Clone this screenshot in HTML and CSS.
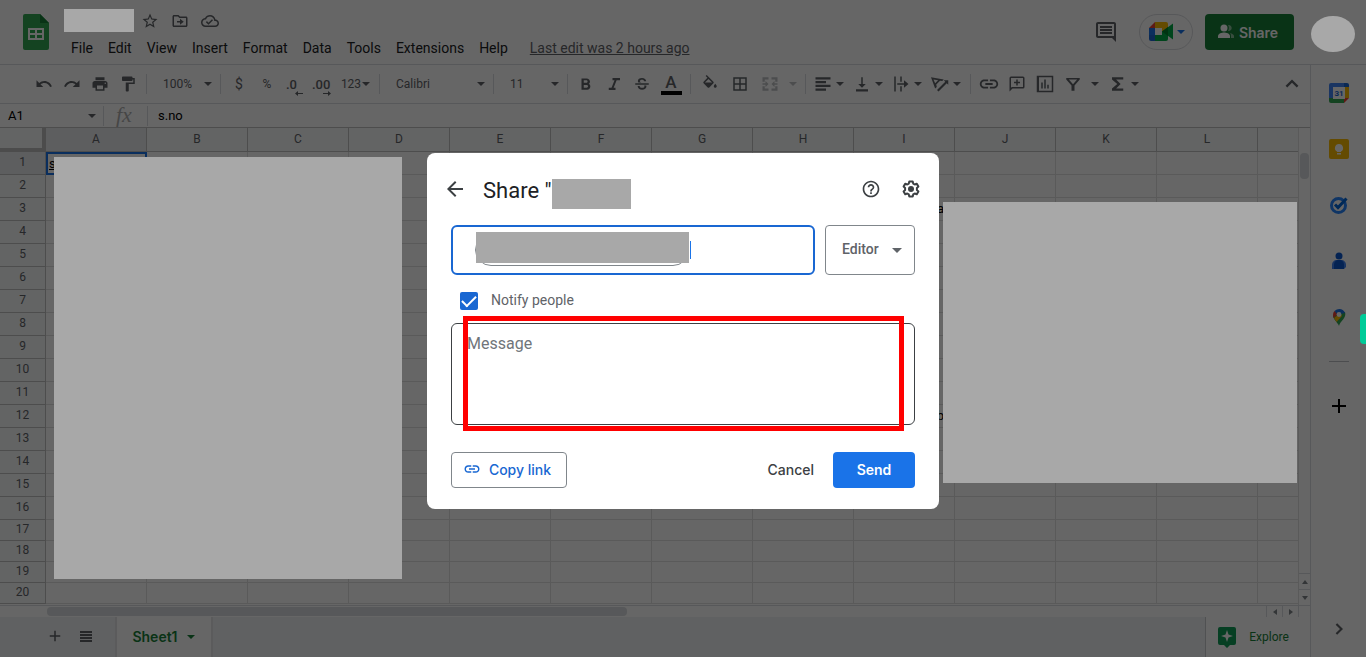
FILE: index.html
```html
<!DOCTYPE html>
<html lang="en">
<head>
<meta charset="utf-8">
<title>Sheet - Share</title>
<link rel="stylesheet" href="styles.css">
</head>
<body>
<svg class="defs" aria-hidden="true">
  <symbol id="caret" viewBox="0 0 10 6"><path d="M1 1h8L5 5z"/></symbol>
</svg>
<div class="app">
  <header class="topbar">
    <svg class="logo" viewBox="0 0 26 36"><path fill="#34a853" d="M2 0h15l9 9v25a2 2 0 0 1-2 2H2a2 2 0 0 1-2-2V2a2 2 0 0 1 2-2z"/><path fill="#188038" d="M17 0l9 9h-9z"/><path fill="#fff" fill-rule="evenodd" d="M5 14h16v12H5zM7 16v3h5v-3zM14 16v3h5v-3zM7 21v3h5v-3zM14 21v3h5v-3z"/></svg>
    <div class="titles">
      <div class="docline">
        <svg viewBox="0 0 24 24"><path d="M22 9.24l-7.19-.62L12 2 9.19 8.63 2 9.24l5.46 4.73L5.82 21 12 17.27 18.18 21l-1.63-7.03L22 9.24zM12 15.4l-3.76 2.27 1-4.28-3.32-2.88 4.38-.38L12 6.1l1.71 4.04 4.38.38-3.32 2.88 1 4.28L12 15.4z"/></svg>
        <svg viewBox="0 0 24 24"><path d="M20 6h-8l-2-2H4c-1.100 0-2 .9-2 2v12c0 1.100.9 2 2 2h16c1.100 0 2-.9 2-2V8c0-1.100-.9-2-2-2zm0 12H4V6h5.200l2 2H20v10zm-8-4v3l5-4-5-4v3H8v2z"/></svg>
        <svg viewBox="0 0 24 24"><path d="M19.350 10.040C18.670 6.590 15.640 4 12 4 9.110 4 6.600 5.640 5.350 8.040 2.340 8.360 0 10.910 0 14c0 3.310 2.690 6 6 6h13c2.760 0 5-2.240 5-5 0-2.640-2.050-4.780-4.650-4.960zM19 18H6c-2.210 0-4-1.790-4-4 0-2.050 1.530-3.760 3.560-3.970l1.070-.11.500-.95C8.080 7.140 9.940 6 12 6c2.620 0 4.880 1.860 5.390 4.430l.3 1.500 1.530.11c1.560.1 2.780 1.410 2.780 2.960 0 1.650-1.350 3-3 3zm-9-3.800L7.900 12.100 6.500 13.500 10 17l6-6-1.400-1.400z"/></svg>
      </div>
      <nav class="menu">
        <button>File</button><button>Edit</button><button>View</button><button>Insert</button><button>Format</button><button>Data</button><button>Tools</button><button>Extensions</button><button>Help</button>
        <a href="#history">Last edit was 2 hours ago</a>
      </nav>
    </div>
    <div class="topactions">
      <button class="plain" aria-label="Comments"><svg width="24" height="24" viewBox="0 0 24 24"><path d="M22 4c0-1.100-.9-2-2-2H4c-1.100 0-2 .9-2 2v12c0 1.100.9 2 2 2h14l4 4V4zm-2 12H4V4h16v12zM6 12h12v2H6zm0-3h12v2H6zm0-3h12v2H6z"/></svg></button>
      <button class="meet" aria-label="Meet">
        <svg width="24" height="20" viewBox="0 0 24 20"><path fill="#ea4335" d="M0 6l6-6v6z"/><path fill="#fbbc04" d="M6 0h11a2 2 0 0 1 2 2v6l-6 2V6H6z"/><path fill="#1a73e8" d="M0 6h6v7H0z"/><path fill="#1967d2" d="M0 13h6v6H2a2 2 0 0 1-2-2z"/><path fill="#00ac47" d="M6 13h7V9h6v8a2 2 0 0 1-2 2H6zM13 9.500L24 1.500v16z"/><path fill="#00832d" d="M13 9.500l6-4.500v9z"/></svg>
        <svg class="blue" width="10" height="6"><use href="#caret"/></svg>
      </button>
      <button class="sharebtn"><svg width="18" height="16" viewBox="0 0 18 16"><circle cx="7" cy="4" r="3.500" fill="currentColor"/><path fill="currentColor" d="M1 14v-2c0-2.500 4-3.500 6-3.500s6 1 6 3.500v2z"/><path fill="currentColor" opacity=".5" d="M11 1c5-.5 5 6.500 0 6 1.200-2 1.200-4 0-6zM13 9c2 .5 4 1.500 4 3v2h-3v-2c0-1.200-.3-2.200-1-3z"/></svg>Share</button>
      <span class="avatar-slot"></span>
    </div>
  </header>
  <div class="body">
    <div class="work">
      <div class="toolbar">
        <button class="ic" aria-label="Undo"><svg viewBox="0 0 24 24"><path d="M12.500 8c-2.650 0-5.050 1-6.900 2.600L2 7v9h9l-3.620-3.620c1.390-1.160 3.160-1.880 5.120-1.880 3.540 0 6.550 2.310 7.600 5.500l2.370-.78C21.080 11.030 17.150 8 12.500 8z"/></svg></button>
        <button class="ic" aria-label="Redo"><svg viewBox="0 0 24 24"><path d="M18.400 10.600C16.550 9 14.150 8 11.500 8c-4.650 0-8.580 3.030-9.960 7.220L3.900 16c1.050-3.190 4.050-5.500 7.600-5.500 1.950 0 3.730.72 5.120 1.880L13 16h9V7l-3.600 3.600z"/></svg></button>
        <button class="ic" aria-label="Print"><svg viewBox="0 0 24 24"><path d="M19 8H5c-1.660 0-3 1.340-3 3v6h4v4h12v-4h4v-6c0-1.660-1.340-3-3-3zm-3 11H8v-5h8v5zm3-7c-.55 0-1-.45-1-1s.45-1 1-1 1 .45 1 1-.45 1-1 1zm-1-9H6v4h12V3z"/></svg></button>
        <button class="ic" aria-label="Paint format"><svg viewBox="0 0 24 24"><path d="M18 4V3c0-.55-.45-1-1-1H5c-.55 0-1 .45-1 1v4c0 .55.45 1 1 1h12c.55 0 1-.45 1-1V6h1v4H9v11c0 .55.45 1 1 1h2c.55 0 1-.45 1-1v-9h8V4h-3z"/></svg></button>
        <i class="sep"></i>
        <button class="pick">100%<svg width="10" height="6"><use href="#caret"/></svg></button>
        <i class="sep flush"></i>
        <button class="ic txt">$</button><button class="ic txt small">%</button>
        <button class="ic txt dec">.0<svg width="8" height="5" viewBox="0 0 8 5"><path d="M3 0v2h5v1H3v2L0 2.500z"/></svg></button>
        <button class="ic txt dec">.00<svg width="8" height="5" viewBox="0 0 8 5"><path d="M5 0v2H0v1h5v2l3-2.500z"/></svg></button>
        <button class="num">123<svg width="10" height="6"><use href="#caret"/></svg></button>
        <i class="sep"></i>
        <button class="pick wide">Calibri<svg width="10" height="6"><use href="#caret"/></svg></button>
        <i class="sep bare"></i>
        <button class="pick">11<svg width="10" height="6"><use href="#caret"/></svg></button>
        <i class="sep flush"></i>
        <button class="ic" aria-label="Bold"><svg viewBox="0 0 24 24"><path d="M15.600 11.800c1-.7 1.700-1.800 1.700-2.800 0-2.500-1.900-4.500-4.400-4.500H6v15h7.700c2.300 0 4.100-1.900 4.100-4.200 0-1.600-.9-2.900-2.200-3.500zM9 7h3.400c.9 0 1.700.7 1.700 1.700s-.8 1.700-1.700 1.700H9zm3.900 10H9v-3.700h3.900c1 0 1.800.8 1.800 1.800S13.900 17 12.900 17z"/></svg></button>
        <button class="ic" aria-label="Italic"><svg viewBox="0 0 24 24"><path d="M10 4v3h2.700l-4 10H5v3h9v-3h-2.500l4-10H20V4z"/></svg></button>
        <button class="ic" aria-label="Strikethrough"><svg viewBox="0 0 24 24"><path d="M3 11h18v2H3zM12 4c-3.300 0-5.500 1.700-5.500 4 0 .8.200 1.400.6 2h4.200C10 9.600 9.200 9 9.200 8c0-1 1.100-1.800 2.800-1.800S14.800 7 14.900 8.300h2.700C17.500 5.700 15.300 4 12 4zm2.800 10c.3.400.4.800.4 1.300 0 1.100-1.200 1.800-3 1.800-2 0-3.200-.9-3.300-2.600H6.200c.1 3.200 2.500 5 5.900 5s5.800-1.700 5.800-4.200c0-.5-.1-.9-.2-1.300z"/></svg></button>
        <button class="ic textcolor" aria-label="Text color">A</button>
        <i class="sep"></i>
        <button class="ic w30" aria-label="Fill color"><svg viewBox="0 0 24 24"><path d="M16.560 8.940L7.620 0 6.210 1.410l2.380 2.380-5.150 5.150c-.59.59-.59 1.540 0 2.120l5.500 5.500c.29.29.68.440 1.060.440s.77-.15 1.060-.440l5.500-5.500c.59-.58.59-1.530 0-2.120zM5.210 10L10 5.210 14.790 10zM19 11.500s-2 2.170-2 3.500c0 1.100.9 2 2 2s2-.9 2-2c0-1.330-2-3.500-2-3.500z"/></svg></button>
        <button class="ic w30" aria-label="Borders"><svg viewBox="0 0 24 24"><path fill-rule="evenodd" d="M3 3h18v18H3zm2 2v6h6V5zm8 0v6h6V5zm-8 8v6h6v-6zm8 0v6h6v-6z"/></svg></button>
        <button class="ic w30 off" aria-label="Merge"><svg viewBox="0 0 24 24"><path d="M2 3h8v3H5v3H2zM14 3h8v6h-3V6h-5zM2 15h3v3h5v3H2zM19 15h3v6h-8v-3h5zM2 11h4V8l4 4-4 4v-3H2zM22 11h-4V8l-4 4 4 4v-3h4z"/></svg></button>
        <button class="mini off" aria-label="Merge type"><svg width="10" height="6"><use href="#caret"/></svg></button>
        <i class="sep"></i>
        <button class="duo" aria-label="Horizontal align"><svg viewBox="0 0 24 24"><path d="M2 3h20v3H2zM2 8h14v3H2zM2 13h20v3H2zM2 18h14v3H2z"/></svg><svg class="c"><use href="#caret"/></svg></button>
        <button class="duo" aria-label="Vertical align"><svg viewBox="0 0 24 24"><path d="M17 12h-4V3h-2v9H7l5 5zM4 19v3h16v-3z"/></svg><svg class="c"><use href="#caret"/></svg></button>
        <button class="duo" aria-label="Wrapping"><svg viewBox="0 0 24 24"><path d="M3 2h2v20H3zM11 2h2v7h-2zM11 15h2v7h-2zM7 11h9V7l6 5-6 5v-4H7z"/></svg><svg class="c"><use href="#caret"/></svg></button>
        <button class="duo" aria-label="Rotation"><svg viewBox="0 0 24 24"><path d="M0 3l17 3-2 2-3-.5-5 5 .7 3.500L5.500 18zm3.300 2.900L5.500 11l4-4zM23 7v6l-2-2L10 22l-2-2L19 9l-2-2z"/></svg><svg class="c"><use href="#caret"/></svg></button>
        <i class="sep"></i>
        <button class="ic" aria-label="Link"><svg class="big" viewBox="0 0 24 24"><path d="M3.900 12c0-1.710 1.390-3.100 3.100-3.100h4V7H7c-2.760 0-5 2.240-5 5s2.240 5 5 5h4v-1.900H7c-1.710 0-3.100-1.390-3.100-3.100zM8 13h8v-2H8v2zm9-6h-4v1.900h4c1.710 0 3.100 1.390 3.100 3.100s-1.390 3.100-3.100 3.100h-4V17h4c2.760 0 5-2.240 5-5s-2.240-5-5-5z"/></svg></button>
        <button class="ic" aria-label="Comment"><svg viewBox="0 0 24 24"><path fill-rule="evenodd" d="M4 2h16a2 2 0 0 1 2 2v12a2 2 0 0 1-2 2H6l-4 4V4a2 2 0 0 1 2-2zm0 2v13l1-1h15V4zm7 2h2v3h3v2h-3v3h-2v-3H8V9h3z"/></svg></button>
        <button class="ic" aria-label="Chart"><svg viewBox="0 0 24 24"><path fill-rule="evenodd" d="M1 1h22v22H1zm3 2v18h17V3zm3 7h2v8H7zm4-4h2v12h-2zm4 7h2v5h-2z"/></svg></button>
        <button class="duo filter" aria-label="Filter"><svg viewBox="0 0 24 24"><path fill-rule="evenodd" d="M3 4h18v2l-7 8v7h-4v-7L3 6zm3.500 2L12 12.300 17.500 6z"/></svg><svg class="c"><use href="#caret"/></svg></button>
        <button class="duo" aria-label="Functions"><svg viewBox="0 0 24 24"><path d="M19 3H4v3l7 6-7 6v3h15v-3H9.500l6-6-6-6H19z"/></svg><svg class="c"><use href="#caret"/></svg></button>
        <button class="ic collapse" aria-label="Hide the menus"><svg class="big" viewBox="0 0 24 24"><path d="M12 7l-7 7 1.800 1.800L12 10.600l5.200 5.200L19 14z"/></svg></button>
      </div>
      <div class="formula">
        <button class="namebox">A1<svg width="10" height="6"><use href="#caret"/></svg></button>
        <span class="fx">fx</span>
        <input aria-label="Formula" value="s.no">
      </div>
      <div class="gridrow">
        <div class="grid">
          <table>
            <colgroup><col class="rh"><col span="12" class="cw"><col></colgroup>
            <thead><tr><th class="corner"></th><th class="on">A</th><th>B</th><th>C</th><th>D</th><th>E</th><th>F</th><th>G</th><th>H</th><th>I</th><th>J</th><th>K</th><th>L</th><th></th></tr></thead>
            <tbody>
              <tr><th class="on">1</th><td class="sel">s.no</td><td></td><td></td><td></td><td></td><td></td><td></td><td></td><td></td><td></td><td></td><td></td><td></td></tr>
              <tr><th>2</th><td></td><td></td><td></td><td></td><td></td><td></td><td></td><td></td><td></td><td></td><td></td><td></td><td></td></tr>
              <tr><th>3</th><td></td><td></td><td></td><td></td><td></td><td></td><td></td><td></td><td class="end">a</td><td></td><td></td><td></td><td></td></tr>
              <tr><th>4</th><td></td><td></td><td></td><td></td><td></td><td></td><td></td><td></td><td></td><td></td><td></td><td></td><td></td></tr>
              <tr><th>5</th><td></td><td></td><td></td><td></td><td></td><td></td><td></td><td></td><td></td><td></td><td></td><td></td><td></td></tr>
              <tr><th>6</th><td></td><td></td><td></td><td></td><td></td><td></td><td></td><td></td><td></td><td></td><td></td><td></td><td></td></tr>
              <tr><th>7</th><td></td><td></td><td></td><td></td><td></td><td></td><td></td><td></td><td></td><td></td><td></td><td></td><td></td></tr>
              <tr><th>8</th><td></td><td></td><td></td><td></td><td></td><td></td><td></td><td></td><td></td><td></td><td></td><td></td><td></td></tr>
              <tr><th>9</th><td></td><td></td><td></td><td></td><td></td><td></td><td></td><td></td><td></td><td></td><td></td><td></td><td></td></tr>
              <tr><th>10</th><td></td><td></td><td></td><td></td><td></td><td></td><td></td><td></td><td></td><td></td><td></td><td></td><td></td></tr>
              <tr><th>11</th><td></td><td></td><td></td><td></td><td></td><td></td><td></td><td></td><td></td><td></td><td></td><td></td><td></td></tr>
              <tr><th>12</th><td></td><td></td><td></td><td></td><td></td><td></td><td></td><td></td><td class="end">b</td><td></td><td></td><td></td><td></td></tr>
              <tr><th>13</th><td></td><td></td><td></td><td></td><td></td><td></td><td></td><td></td><td></td><td></td><td></td><td></td><td></td></tr>
              <tr><th>14</th><td></td><td></td><td></td><td></td><td></td><td></td><td></td><td></td><td></td><td></td><td></td><td></td><td></td></tr>
              <tr><th>15</th><td></td><td></td><td></td><td></td><td></td><td></td><td></td><td></td><td></td><td></td><td></td><td></td><td></td></tr>
              <tr><th>16</th><td></td><td></td><td></td><td></td><td></td><td></td><td></td><td></td><td></td><td></td><td></td><td></td><td></td></tr>
              <tr class="low"><th>17</th><td></td><td></td><td></td><td></td><td></td><td></td><td></td><td></td><td></td><td></td><td></td><td></td><td></td></tr>
              <tr class="low"><th>18</th><td></td><td></td><td></td><td></td><td></td><td></td><td></td><td></td><td></td><td></td><td></td><td></td><td></td></tr>
              <tr class="low"><th>19</th><td></td><td></td><td></td><td></td><td></td><td></td><td></td><td></td><td></td><td></td><td></td><td></td><td></td></tr>
              <tr class="low"><th>20</th><td></td><td></td><td></td><td></td><td></td><td></td><td></td><td></td><td></td><td></td><td></td><td></td><td></td></tr>
            </tbody>
          </table>
        </div>
        <div class="vscroll"><i class="thumb"></i><i class="arrow"><svg viewBox="0 0 6 4"><path d="M0 4h6L3 0z"/></svg></i><i class="arrow"><svg viewBox="0 0 6 4"><path d="M0 0h6L3 4z"/></svg></i></div>
      </div>
      <div class="hscroll"><i class="thumb"></i><i class="arrow"><svg viewBox="0 0 4 6"><path d="M4 0v6L0 3z"/></svg></i><i class="arrow"><svg viewBox="0 0 4 6"><path d="M0 0v6l4-3z"/></svg></i><i class="cornerbox"></i></div>
      <footer class="tabs">
        <button class="plain" aria-label="Add sheet"><svg width="18" height="18" viewBox="0 0 24 24"><path d="M19 13h-6v6h-2v-6H5v-2h6V5h2v6h6z"/></svg></button>
        <button class="plain" aria-label="All sheets"><svg width="12" height="12" viewBox="0 0 12 12"><path d="M0 1h12v2H0zM0 4h12v2H0zM0 7h12v2H0zM0 10h12v2H0z"/></svg></button>
        <button class="tab">Sheet1<svg width="10" height="6"><use href="#caret"/></svg></button>
        <button class="explore"><svg width="18" height="21" viewBox="0 0 18 21"><path fill="#0f9d58" d="M2 0h14a2 2 0 0 1 2 2v14a2 2 0 0 1-2 2h-4l-3 3-3-3H2a2 2 0 0 1-2-2V2a2 2 0 0 1 2-2z"/><path fill="#fff" d="M9 3l1.500 4.500L15 9l-4.500 1.500L9 15l-1.500-4.500L3 9l4.500-1.500z"/></svg>Explore</button>
      </footer>
    </div>
    <aside class="side">
      <button class="plain" aria-label="Calendar"><svg width="20" height="20" viewBox="0 0 20 20"><path fill="#4285f4" d="M2 0h13v4H4v11H0V2a2 2 0 0 1 2-2z"/><path fill="#1967d2" d="M15 0h3a2 2 0 0 1 2 2v2h-5z"/><path fill="#fbbc04" d="M15 4h5v11h-5z"/><path fill="#34a853" d="M0 15h15v5H2a2 2 0 0 1-2-2z"/><path fill="#ea4335" d="M15 15h5l-5 5z"/><path fill="#fff" d="M4 4h12v12H4z"/><text x="10" y="13" text-anchor="middle" class="day">31</text></svg></button>
      <button class="plain" aria-label="Keep"><svg width="20" height="20" viewBox="0 0 20 20"><rect width="20" height="20" rx="2" fill="#fbbc04"/><path fill="#fff" d="M10 5a4 4 0 0 1 2 7.500V13H8v-.5A4 4 0 0 1 10 5zM8 14h4v1.500H8z"/></svg></button>
      <button class="plain" aria-label="Tasks"><svg width="20" height="20" viewBox="0 0 20 20"><circle cx="9.500" cy="10.500" r="7" fill="none" stroke="#2684fc" stroke-width="3"/><path d="M6 9.500l3 3 8.500-9" fill="none" stroke="#0066da" stroke-width="3"/></svg></button>
      <button class="plain" aria-label="Contacts"><svg width="20" height="20" viewBox="0 0 20 20"><circle cx="10" cy="5" r="3.500" fill="#0b57d0"/><path fill="#4285f4" d="M3 18v-4c0-3 2-5 5-5h4c3 0 5 2 5 5v2l-2 2z"/><path fill="#0b57d0" d="M5 18v-4c0-3 1.500-5 5-5s5 2 5 5v4z"/></svg></button>
      <button class="plain" aria-label="Maps"><svg width="20" height="20" viewBox="0 0 20 20"><path fill="#34a853" d="M10 19c-.7-3-6-6.500-6-11l12-3c2 6-5 9-6 14z"/><path fill="#fbbc04" d="M5 11l6-5 2 3-5.500 6z"/><path fill="#ea4335" d="M4.500 11C3.500 8 4 5.500 5.500 4L9 7z"/><path fill="#1a73e8" d="M5.500 4C9 .5 14.500 1.500 16 6l-5 1-3 0z"/><circle cx="10" cy="7.500" r="2.400" fill="#fff"/></svg></button>
      <hr>
      <button class="plain add" aria-label="Get add-ons"><svg width="20" height="20" viewBox="0 0 20 20"><path d="M9 3h2v6h6v2h-6v6H9v-6H3V9h6z"/></svg></button>
      <button class="plain last" aria-label="Hide side panel"><svg width="20" height="20" viewBox="0 0 24 24"><path d="M9.800 5L8 6.800l5.200 5.200L8 17.200 9.800 19l7-7z"/></svg></button>
    </aside>
  </div>
</div>

<div class="scrim">
  <form class="dialog" role="dialog" aria-label="Share">
    <div class="dhead">
      <button type="button" class="plain" aria-label="Back"><svg width="24" height="24" viewBox="0 0 24 24"><path d="M20 11H7.830l5.590-5.590L12 4l-8 8 8 8 1.410-1.410L7.830 13H20v-2z"/></svg></button>
      <h2>Share "<span class="mask name"></span></h2>
      <button type="button" class="plain help" aria-label="Help"><svg width="20" height="20" viewBox="0 0 24 24"><path d="M11 18h2v-2h-2v2zm1-16C6.480 2 2 6.480 2 12s4.480 10 10 10 10-4.480 10-10S17.520 2 12 2zm0 18c-4.410 0-8-3.590-8-8s3.590-8 8-8 8 3.590 8 8-3.590 8-8 8zm0-14c-2.210 0-4 1.790-4 4h2c0-1.100.9-2 2-2s2 .9 2 2c0 2-3 1.750-3 5h2c0-2.250 3-2.500 3-5 0-2.210-1.790-4-4-4z"/></svg></button>
      <button type="button" class="plain" aria-label="Settings"><svg width="20" height="20" viewBox="0 0 20 20"><path d="M8.300 2.500h3.400l.5 2.100 1.500.9 2.100-.7 1.600 2.800L15.900 9v2l1.500 1.400-1.600 2.800-2.100-.7-1.500.9-.5 2.100H8.300l-.5-2.100-1.500-.9-2.100.7-1.600-2.800L4.100 11V9L2.600 7.600l1.600-2.800 2.100.7 1.500-.9z" fill="none" stroke="#3c4043" stroke-width="2" stroke-linejoin="round"/><circle cx="10" cy="10" r="3"/></svg></button>
    </div>
    <div class="people">
      <div class="field"><span class="chip"><span class="mask"></span></span><input aria-label="Add people"></div>
      <div class="role"><select aria-label="Role"><option>Editor</option></select><svg width="10" height="5" viewBox="1 1 8 4"><path d="M1 1h8L5 5z"/></svg></div>
    </div>
    <label class="notify"><input type="checkbox" checked><span>Notify people</span></label>
    <div class="message"><textarea aria-label="Message" placeholder="Message"></textarea><i class="highlight"></i></div>
    <div class="actions">
      <button type="button" class="copy"><svg width="18" height="18" viewBox="0 0 24 24"><path d="M3.900 12c0-1.710 1.390-3.100 3.100-3.100h4V7H7c-2.760 0-5 2.240-5 5s2.240 5 5 5h4v-1.900H7c-1.710 0-3.100-1.390-3.100-3.100zM8 13h8v-2H8v2zm9-6h-4v1.900h4c1.710 0 3.100 1.390 3.100 3.100s-1.390 3.100-3.100 3.100h-4V17h4c2.760 0 5-2.240 5-5s-2.240-5-5-5z"/></svg>Copy link</button>
      <button type="button" class="cancel">Cancel</button>
      <button type="button" class="send">Send</button>
    </div>
  </form>
</div>
<div class="cover doc"></div>
<div class="cover avatar"></div>
<div class="cover left"></div>
<div class="cover right"></div>
<div class="cover knob"></div>
</body>
</html>
```
FILE: styles.css
```css
* { box-sizing: border-box; }
body { margin: 0; font-family: Roboto, "Liberation Sans", sans-serif; font-size: 14px; color: #000; overflow: hidden; }
button, input, select, textarea { font: inherit; color: inherit; }
button { background: none; border: 0; padding: 0; display: flex; align-items: center; justify-content: center; white-space: nowrap; }
svg { display: block; fill: currentColor; flex: none; }
i { font-style: normal; }
.defs { display: none; }
.app { height: 100vh; display: flex; flex-direction: column; background: #fff; color: #5f6368; }

.topbar { flex: none; height: 65px; display: flex; border-bottom: 1px solid #dadce0; }
.logo { width: 26px; height: 36px; margin: 14px 15px 0 23px; }
.docline { display: flex; gap: 12px; padding: 12px 0 0 77px; }
.docline svg { width: 18px; height: 18px; }
.menu { display: flex; align-items: center; gap: 1px; height: 36px; color: #202124; }
.menu button { padding: 0 7px; }
.menu a { margin-left: 14px; color: #5f6368; }
.topactions { margin-left: auto; display: flex; align-items: flex-start; padding-top: 14px; }
.plain { flex: none; }
.topactions .plain { height: 36px; margin-right: 21px; }
.meet { width: 54px; height: 36px; border: 1px solid #dadce0; border-radius: 18px; gap: 3px; padding-left: 2px; margin-right: 12px; }
.blue { color: #1a73e8; }
.sharebtn { width: 89px; height: 36px; border-radius: 4px; background: #188038; color: #fff; gap: 4px; padding-right: 4px; font-family: Inter, sans-serif; font-weight: 600; }
.avatar-slot { width: 72px; }

.body { flex: 1; display: flex; min-height: 0; }
.work { flex: 1; min-width: 0; display: flex; flex-direction: column; }
.toolbar { flex: none; height: 39px; display: flex; align-items: center; padding: 0 4px 0 30px; border-bottom: 1px solid #dadce0; font-size: 12px; }
.ic { flex: none; width: 28px; height: 28px; }
.ic svg, .duo svg { width: 18px; height: 18px; }
.ic svg.big { width: 22px; height: 22px; }
.sep { flex: none; width: 1px; height: 20px; background: #dadce0; margin: 0 4px; }
.sep.flush { margin-left: 0; }
.sep.bare { margin: 0; }
.sep + .pick { margin-left: -4px; }
.sep.bare + .pick { margin-left: 0; }
.pick { width: 73px; padding: 0 7px 0 16px; justify-content: space-between; }
.pick.wide { width: 113px; }
.txt { font-size: 14px; }
.txt.small { font-size: 12px; }
.ic.dec { flex-direction: column; align-items: flex-start; font-size: 13px; font-weight: 500; line-height: 12px; padding: 6px 4px 0 5px; }
.ic.dec svg { width: 8px; height: 5px; margin-left: 9px; }
.ic.dec + .dec { padding-left: 3px; }
.ic.dec + .dec svg { margin-left: 11px; }
.num { width: 38px; font-size: 12px; }
.ic.textcolor { width: 30px; flex-direction: column; font-size: 17px; font-weight: 500; line-height: 17px; }
.textcolor::after { content: ""; width: 21px; height: 4px; background: #000; }
.ic.w30 { width: 30px; }
.off { opacity: .4; }
.mini { width: 16px; }
.duo { flex: none; width: 39px; gap: 3px; }
.duo svg.c { width: 10px; height: 6px; }
.filter { width: 46px; gap: 8px; }
.collapse { margin-left: auto; }

.formula { flex: none; height: 24px; display: flex; align-items: center; border-bottom: 1px solid #c0c0c0; color: #000; font-size: 13px; }
.namebox { width: 104px; height: 20px; padding: 0 6px 0 8px; justify-content: space-between; border-right: 1px solid #dadce0; }
.namebox svg { color: #5f6368; }
.fx { width: 44px; height: 20px; padding-left: 12px; border-right: 1px solid #dadce0; color: #b0b0b0; font: italic 22px/18px "Liberation Serif", serif; }
.formula input { flex: 1; border: 0; padding: 0 10px; background: none; outline: 0; height: 20px; }

.gridrow { flex: 1; min-height: 0; display: flex; }
.grid { flex: 1; min-width: 0; overflow: hidden; }
table { width: 100%; table-layout: fixed; border-collapse: separate; border-spacing: 0; }
.rh { width: 46px; }
.cw { width: 101px; }
th, td { height: 23px; padding: 0 0 2px; line-height: 20px; border-right: 1px solid #e0e1e1; border-bottom: 1px solid #e0e1e1; white-space: nowrap; overflow: hidden; }
th { font-weight: 400; font-size: 12px; background: #f8f9fa; border-color: #c0c0c0; color: #5f6368; }
thead th { height: 24px; }
th.on { background: #e8eaed; }
th.corner { border-right: 4px solid #bdbdbd; border-bottom: 4px solid #bdbdbd; }
.low th, .low td { height: 21px; line-height: 18px; }
td.sel { border: 2px solid #1a73e8; line-height: 17px; padding: 0 0 0 1px; color: #000; font-size: 13px; text-decoration: underline; }
td.end { text-align: right; padding: 0 10px 0 0; color: #000; font-size: 13px; }
.vscroll { flex: none; width: 12px; display: flex; flex-direction: column; border-left: 1px solid #e0e1e1; margin-left: -1px; }
.vscroll .thumb { width: 9px; height: 26px; margin: 25px 1px auto; border-radius: 4px; background: #dadce0; }
.arrow { flex: none; display: flex; align-items: center; justify-content: center; color: #80868b; }
.vscroll .arrow { height: 16px; border-top: 1px solid #dadce0; }
.vscroll .arrow svg { width: 6px; height: 4px; }
.hscroll { flex: none; height: 12px; display: flex; align-items: center; border-top: 1px solid #dadce0; }
.hscroll .thumb { width: 580px; height: 9px; margin: 0 auto 0 47px; border-radius: 4px; background: #dadce0; }
.hscroll .arrow { width: 16px; height: 11px; border-left: 1px solid #dadce0; }
.hscroll .arrow svg { width: 4px; height: 6px; }
.cornerbox { width: 12px; height: 11px; border-left: 1px solid #dadce0; }
.tabs { flex: none; height: 40px; display: flex; background: #f1f3f4; }
.tabs .plain { width: 31px; height: 37px; }
.tabs .plain:first-child { margin-left: 39px; }
.tab { width: 98px; margin-left: 14px; padding-bottom: 1px; gap: 8px; background: #fff; border: solid #e3e4e6; border-width: 0 2px; color: #188038; font-family: Inter, sans-serif; font-weight: 600; }
.explore { margin-left: auto; width: 105px; gap: 13px; padding-right: 9px; background: #fff; border-left: 1px solid #c8cacc; color: #188038; font-size: 12px; }

.side { flex: none; width: 56px; display: flex; flex-direction: column; align-items: center; gap: 36px; padding: 18px 0; border-left: 1px solid #dadce0; }
.day { font: 700 8px Roboto, sans-serif; fill: #1967d2; }
.side hr { width: 20px; margin: -2px 0; border: 0; border-top: 1px solid #bdc1c6; }
.add { color: #000; }
.last { margin-top: auto; }

.scrim { position: fixed; inset: 0; display: flex; align-items: center; justify-content: center; padding-top: 5px; background: rgba(0, 0, 0, .6); }
.dialog { width: 512px; padding: 16px 24px 21px; background: #fff; border-radius: 8px; color: #3c4043; }
.dhead { display: flex; align-items: center; height: 40px; margin: 0 -6px 0 -8px; }
h2 { display: flex; align-items: center; margin: 2px auto 0 16px; font-size: 22px; font-weight: 400; color: #202124; }
.mask { background: #a8a8a8; }
.name { width: 79px; height: 30px; margin-top: 10px; margin-bottom: 2px; }
.help { margin-right: 20px; }
.people { display: flex; gap: 10px; margin-top: 16px; }
.field { flex: 1; min-width: 0; height: 50px; display: flex; align-items: center; border: 2px solid #1967d2; border-radius: 6px; padding-left: 22px; }
.chip { flex: none; position: relative; width: 214px; height: 32px; border: 1px solid #80868b; border-radius: 16px; }
.chip .mask { position: absolute; left: 0; top: -3px; width: 213px; height: 31px; }
.field input { flex: 1; min-width: 0; height: 18px; margin-left: 1px; border: 0; border-left: 1px solid #1a73e8; outline: 0; }
.role { flex: none; display: flex; align-items: center; width: 90px; border: 1px solid #80868b; border-radius: 4px; padding: 0 12px 0 16px; color: #5f6368; }
.role select { flex: 1; min-width: 0; appearance: none; border: 0; padding: 0 0 2px; background: none; font-weight: 500; }
.notify { display: flex; align-items: center; gap: 13px; margin: 15px 0 0 9px; height: 22px; color: #5f6368; }
.notify span { padding-bottom: 2px; }
.notify input { appearance: none; margin: 0; width: 18px; height: 18px; border-radius: 2px; background: #1967d2; display: grid; place-items: center; }
.notify input::after { content: ""; width: 6px; height: 12px; border: solid #fff; border-width: 0 2px 2px 0; transform: rotate(45deg) translate(-1px, -1px); }
.message { position: relative; margin-top: 11px; }
textarea { display: block; width: 100%; height: 102px; border: 1px solid #3c4043; border-radius: 6px; padding: 10px 15px; resize: none; outline: 0; font-size: 16px; line-height: 20px; }
textarea::placeholder { color: #70757a; opacity: 1; }
.highlight { position: absolute; inset: -7px 11px -6px 12px; border: 5px solid #f00; }
.actions { display: flex; align-items: center; margin-top: 27px; font-family: Inter, sans-serif; font-weight: 500; }
.actions button { height: 36px; border-radius: 4px; padding-bottom: 2px; }
.copy { width: 116px; gap: 8px; border: 1px solid #80868b; color: #1967d2; }
.actions .copy { margin-right: auto; padding-right: 4px; }
.cancel { margin-right: 19px; }
.send { width: 82px; background: #1a73e8; color: #fff; font-weight: 600; }

.cover { position: fixed; background: #a8a8a8; }
.cover.doc { left: 64px; top: 9px; width: 70px; height: 23px; }
.cover.avatar { right: 11px; top: 16px; width: 44px; height: 36px; border-radius: 50%; }
.cover.left { left: 54px; top: 157px; width: 348px; height: 422px; }
.cover.right { right: 69px; top: 202px; width: 354px; height: 281px; }
.cover.knob { right: 0; top: 314px; width: 6px; height: 30px; border-radius: 4px 0 0 4px; background: #00cc99; }
```
